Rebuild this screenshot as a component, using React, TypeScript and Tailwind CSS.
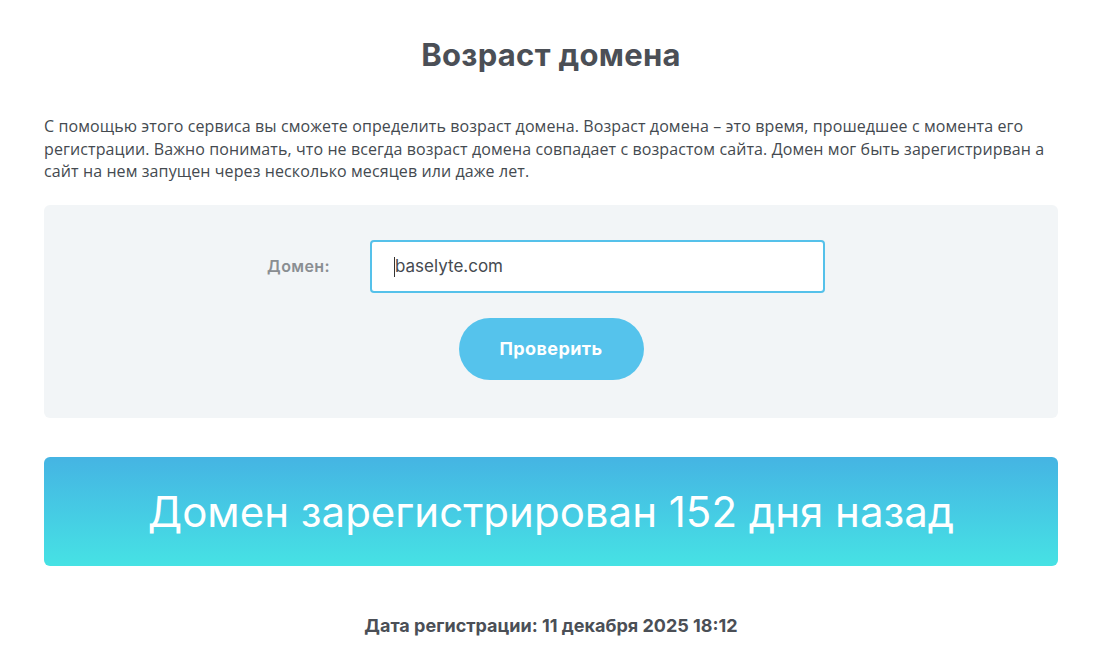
import { FC } from "react";

const heading = "font-['Inter','Liberation_Sans',sans-serif]";
const body = "font-['Open_Sans','Liberation_Sans',sans-serif]";

const DomainAge: FC = () => {
  return (
    <div className="min-h-screen bg-white">
      <div className="ml-[44px] w-[1014px] pt-[35px]">
        <h1 className={`${heading} text-center text-[31px] font-bold tracking-[0.3px] text-[#4b4f56] leading-[40px]`}>
          Возраст домена
        </h1>

        <p className={`${body} mt-[40px] text-[16px] leading-[22.5px] tracking-[0.1px] text-[#444a50] whitespace-nowrap`}>
          С помощью этого сервиса вы сможете определить возраст домена. Возраст домена – это время, прошедшее с момента его
          <br />
          регистрации. Важно понимать, что не всегда возраст домена совпадает с возрастом сайта. Домен мог быть зарегистрирван а
          <br />
          сайт на нем запущен через несколько месяцев или даже лет.
        </p>

        {/* form */}
        <div className="mt-[22px] h-[213px] rounded-[6px] bg-[#f2f5f7] pt-[35px]">
          <div className="flex items-center">
            <label className={`${heading} w-[286px] text-right text-[16px] font-semibold tracking-[0.4px] text-[#8a8e92]`}>
              Домен:
            </label>
            <div className="ml-[40px] flex h-[53px] w-[455px] items-center rounded-[4px] border-2 border-[#55c1ea] bg-white pl-[22px] pt-[2px]">
              <span className="h-[20px] w-px bg-[#333]" />
              <span className={`${heading} text-[17px] text-[#454a50]`}>baselyte.com</span>
            </div>
          </div>
          <div className="mt-[25px] flex justify-center">
            <button className={`${heading} h-[62px] w-[185px] rounded-full bg-[#55c3ec] text-[18px] font-bold tracking-[0.4px] text-white`}>
              Проверить
            </button>
          </div>
        </div>

        {/* result */}
        <div className="mt-[39px] flex h-[109px] items-center justify-center rounded-[6px] bg-gradient-to-b from-[#45b4e3] to-[#46e2e4]">
          <span className={`${heading} text-[42px] font-normal text-white`}>
            Домен зарегистрирован 152 дня назад
          </span>
        </div>

        <p className={`${heading} mt-[46px] text-center text-[18px] font-bold text-[#4b4f56]`}>
          Дата регистрации: 11 декабря 2025 18:12
        </p>
      </div>
    </div>
  );
};

export default function App() {
  return <DomainAge />;
}
